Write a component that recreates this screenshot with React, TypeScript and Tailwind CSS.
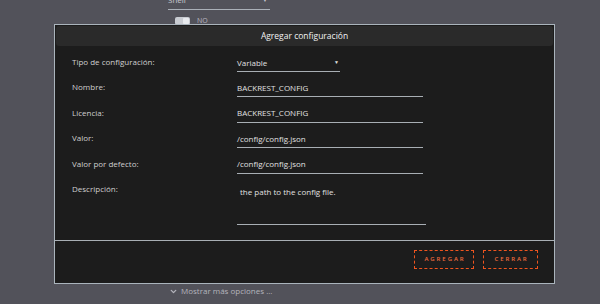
import React from 'react';
import { ChevronDown } from 'lucide-react';

const font = { fontFamily: '"Open Sans", "Noto Sans", sans-serif' };

interface Campo {
  label: string;
  value: string;
}

const campos: Campo[] = [
  { label: 'Nombre:', value: 'BACKREST_CONFIG' },
  { label: 'Licencia:', value: 'BACKREST_CONFIG' },
  { label: 'Valor:', value: '/config/config.json' },
  { label: 'Valor por defecto:', value: '/config/config.json' },
];

function Fila({ label, children }: { label: string; children: React.ReactNode }) {
  return (
    <div className="flex h-[25.4px] items-start">
      <div className="w-[165px] shrink-0 pt-[4px] text-[8px] leading-[12px] text-[#cfcfcf]">{label}</div>
      {children}
    </div>
  );
}

export default function App() {
  return (
    <div className="relative h-[304px] w-full overflow-hidden bg-[#52525a]" style={font}>
      {/* contenido de fondo */}
      <div className="flex h-full flex-col pl-[168px]">
        <div className="-mt-[8px] flex h-[18px] w-[102px] items-end justify-between border-b border-[#aab0b8] pb-[4px] text-[8px] leading-[10px] text-[#c8c8d0]">
          <span>Shell</span>
          <span className="pr-[2px] text-[6px]">▼</span>
        </div>
        <div className="mt-[7px] flex items-center gap-[7px] pl-[7px]">
          <div className="flex h-[8px] w-[15px] items-center rounded-[2px] bg-[#c9ccd2] px-[1px]">
            <div className="ml-auto h-[6px] w-[6px] rounded-[1px] bg-[#e8eaee]" />
          </div>
          <span className="text-[7px] leading-[8px] text-[#b8b8c0]">NO</span>
        </div>
        <div className="mt-auto mb-[8px] flex items-center gap-[3px] pl-[1px] text-[8px] leading-[10px] text-[#b4b4bc]">
          <ChevronDown size={9} strokeWidth={3.5} />
          <span>Mostrar más opciones ...</span>
        </div>
      </div>

      {/* modal */}
      <div className="absolute left-[54px] top-[24px] flex h-[260px] w-[501px] flex-col border border-[#aab4bc] bg-[#1c1c1c]">
        <div className="mx-[1px] mt-[1px] flex h-[20px] items-center justify-center rounded-[3px] bg-[#2a2a2a] text-[8.5px] text-[#f2f2f2]">
          Agregar configuración
        </div>
        <div className="flex h-[195px] flex-col border-b border-[#a8aeb4] pl-[17px] pt-[6px]">
          <Fila label="Tipo de configuración:">
            <div className="mt-[2px] flex h-[18px] w-[103px] items-center justify-between border-b border-[#a8aeb4] text-[8px] text-[#e0e0e0]">
              <span>Variable</span>
              <span className="pr-[1px] text-[5px]">▼</span>
            </div>
          </Fila>
          {campos.map((c) => (
            <Fila key={c.label} label={c.label}>
              <div className="mt-[2px] flex h-[18px] w-[186px] items-center border-b border-[#a8aeb4] text-[8px] text-[#e0e0e0]">
                {c.value}
              </div>
            </Fila>
          ))}
          <div className="flex items-start">
            <div className="w-[165px] shrink-0 pt-[4px] text-[8px] leading-[12px] text-[#cfcfcf]">Descripción:</div>
            <div className="h-[46px] w-[189px] border-b border-[#a8aeb4] pl-[3px] pt-[7px] text-[8px] leading-[12px] text-[#e0e0e0]">
              the path to the config file.
            </div>
          </div>
        </div>
        <div className="flex flex-1 items-start justify-end gap-[9px] pr-[16px] pt-[9px]">
          <button className="flex h-[19px] w-[60px] items-center justify-center border border-dashed border-[#f0541e] pl-[2px] text-[6px] font-semibold tracking-[0.32em] text-[#f06a3c]">
            AGREGAR
          </button>
          <button className="flex h-[19px] w-[55px] items-center justify-center border border-dashed border-[#f0541e] pl-[2px] text-[6px] font-semibold tracking-[0.32em] text-[#f06a3c]">
            CERRAR
          </button>
        </div>
      </div>
    </div>
  );
}
